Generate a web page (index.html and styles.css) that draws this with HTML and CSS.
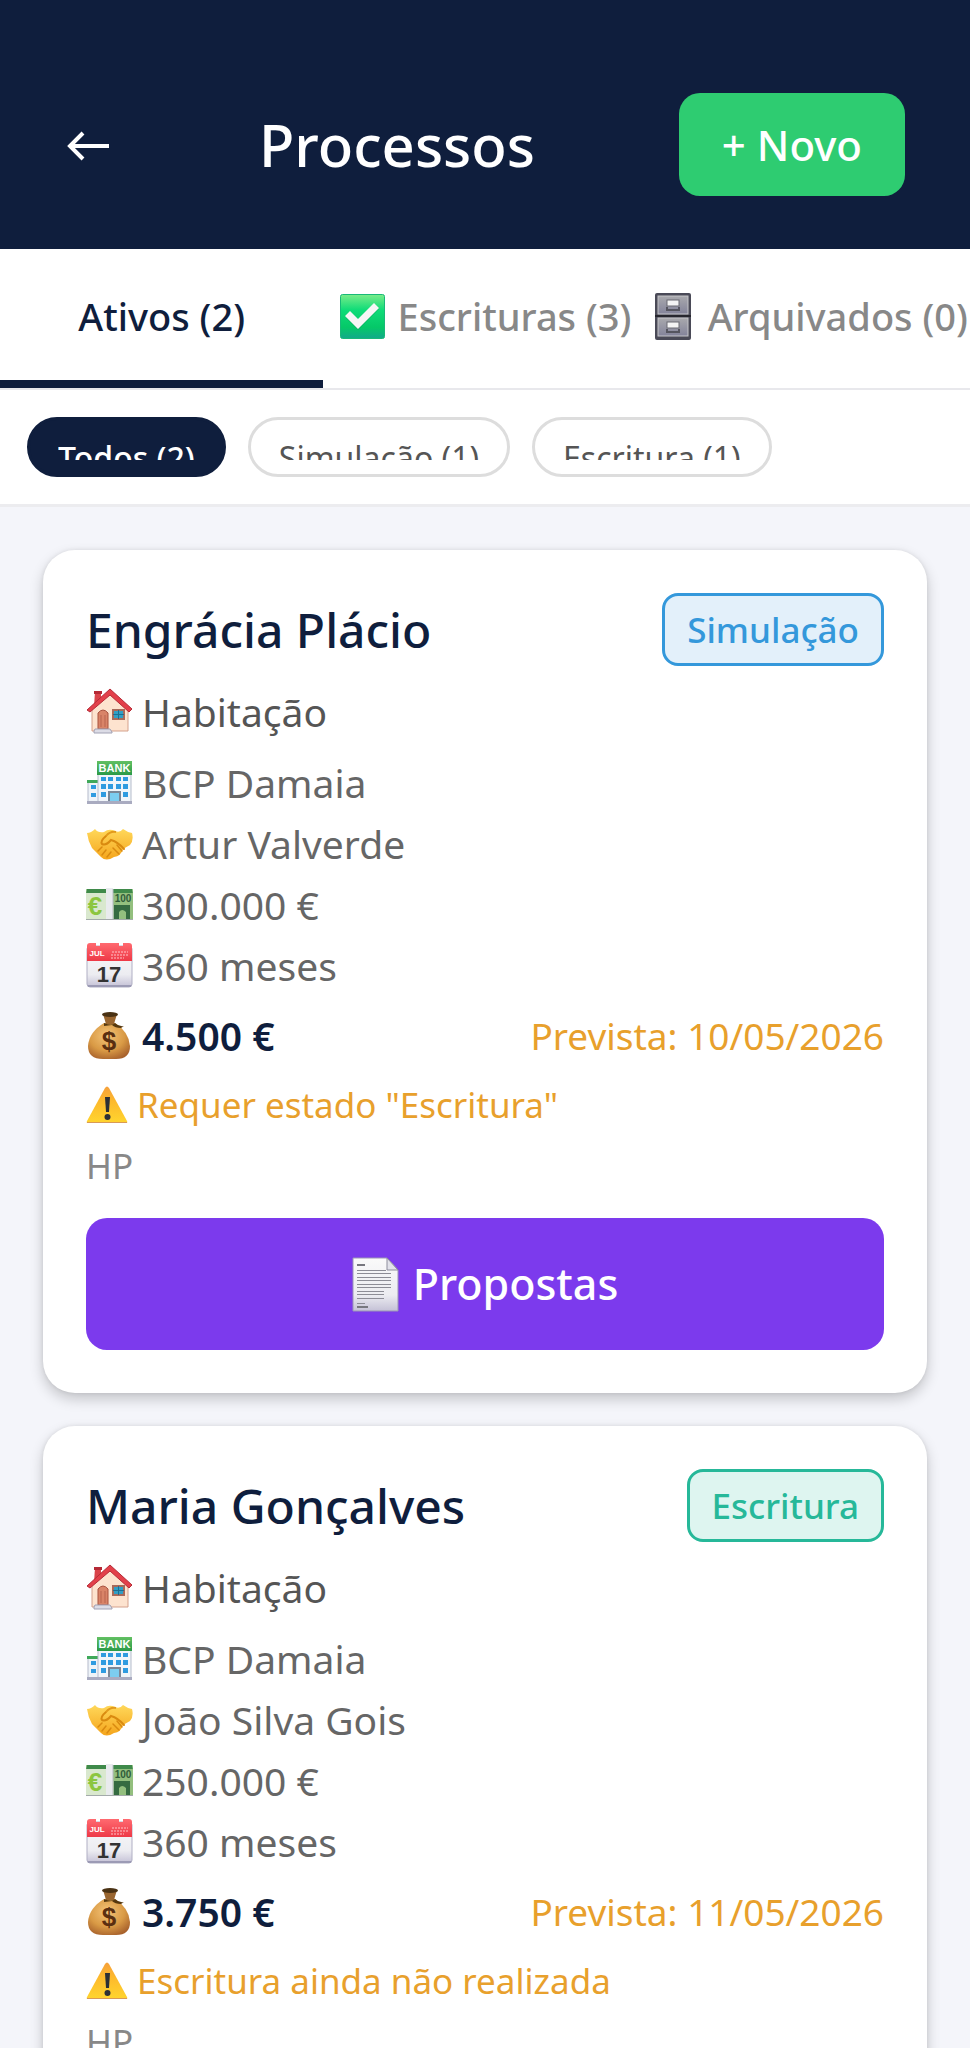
FILE: index.html
```html
<!DOCTYPE html>
<html lang="pt">
<head>
    <meta charset="UTF-8">
    <meta name="viewport" content="width=device-width, initial-scale=1.0">
    <title>Processos</title>
    <link rel="stylesheet" href="styles.css">
</head>
<body>

    <!-- Gradients used by the icons -->
    <svg class="gradients" aria-hidden="true">
        <defs>
            <linearGradient id="gCheck" x1="0" y1="0" x2="0" y2="1">
                <stop offset="0" stop-color="#7aec8a"/>
                <stop offset="0.35" stop-color="#0fdc78"/>
                <stop offset="0.75" stop-color="#05c868"/>
                <stop offset="1" stop-color="#12a98a"/>
            </linearGradient>
            <linearGradient id="gDrawer" x1="0" y1="0" x2="0" y2="1">
                <stop offset="0" stop-color="#a9a9ad"/>
                <stop offset="1" stop-color="#83839a"/>
            </linearGradient>
            <linearGradient id="gHand" x1="0" y1="0" x2="0" y2="1">
                <stop offset="0" stop-color="#ffd85a"/>
                <stop offset="1" stop-color="#f5a51c"/>
            </linearGradient>
            <linearGradient id="gPaper" x1="0" y1="0" x2="0" y2="1">
                <stop offset="0" stop-color="#fafafa"/>
                <stop offset="0.7" stop-color="#ececf1"/>
                <stop offset="1" stop-color="#c4c1d6"/>
            </linearGradient>
            <linearGradient id="gWarn" x1="0" y1="0" x2="0" y2="1">
                <stop offset="0" stop-color="#f5a03c"/>
                <stop offset="0.4" stop-color="#fdb92c"/>
                <stop offset="1" stop-color="#ffd52e"/>
            </linearGradient>
            <linearGradient id="gRed" x1="0" y1="0" x2="0" y2="1">
                <stop offset="0" stop-color="#ff6a70"/>
                <stop offset="1" stop-color="#ee3947"/>
            </linearGradient>
            <linearGradient id="gSign" x1="0" y1="0" x2="0" y2="1">
                <stop offset="0" stop-color="#62c062"/>
                <stop offset="1" stop-color="#2a9a48"/>
            </linearGradient>
            <radialGradient id="gBag" cx="0.45" cy="0.35" r="0.7">
                <stop offset="0" stop-color="#f4c478"/>
                <stop offset="0.6" stop-color="#d99a45"/>
                <stop offset="1" stop-color="#a8622c"/>
            </radialGradient>
        </defs>
    </svg>

    <!-- Icons -->
    <svg class="symbols" aria-hidden="true">
        <symbol id="check" viewBox="0 0 47 47">
            <rect x="1.5" y="1.5" width="44" height="44" rx="2" fill="url(#gCheck)" stroke="#18b978"/>
            <path d="M7 25l5-5 7 7 16-16 5 5-21 21z" fill="#0a9a55" opacity="0.5"/>
            <path d="M6 23l5-5 8 8 16-16 5 5-21 21z" fill="#f6f6f6"/>
        </symbol>

        <symbol id="cabinet" viewBox="0 0 47 47">
            <rect x="6" y="0" width="36" height="47" rx="2" fill="#4a4a57"/>
            <rect x="9" y="3" width="30" height="18" fill="url(#gDrawer)" stroke="#c4c4c8"/>
            <rect x="9" y="25" width="30" height="18" fill="url(#gDrawer)" stroke="#c4c4c8"/>
            <path d="M6 23h36" stroke="#26262e" stroke-width="2"/>
            <rect x="18" y="7" width="12" height="6" fill="#f4f4f4" stroke="#6a6a72"/>
            <path d="M18 14v3h12v-3" fill="none" stroke="#55555f" stroke-width="2"/>
            <rect x="18" y="29" width="12" height="6" fill="#f4f4f4" stroke="#6a6a72"/>
            <path d="M18 36v3h12v-3" fill="none" stroke="#55555f" stroke-width="2"/>
        </symbol>

        <symbol id="house" viewBox="0 0 47 47">
            <path d="M9 4h6v14H8z" fill="#d9434a"/>
            <rect x="8" y="3" width="8" height="3" fill="#b52a36"/>
            <path d="M6 21L24 5l18 16v22H6z" fill="#fde3cf" stroke="#d4a18c"/>
            <path d="M1 22L24 1l22 20-3 3L24 7 4 24z" fill="#e3404a" stroke="#b62c38" stroke-linejoin="round"/>
            <path d="M12 41V25q5-6 10 0v16z" fill="#d98468" stroke="#a8523f"/>
            <path d="M15 39V27M19 39V27" stroke="#b9654f"/>
            <rect x="27" y="22" width="11" height="9" fill="#2f9fc6" stroke="#a86a5a" stroke-width="2"/>
            <path d="M32.5 22v9M27 26.5h11" stroke="#1c6f93"/>
            <path d="M9 41h15l2 3v1H8v-2z" fill="#dcdce6" stroke="#a2a2b4"/>
        </symbol>

        <symbol id="bank" viewBox="0 0 47 47">
            <rect x="2" y="23" width="12" height="21" fill="#eef3f8" stroke="#b5bccb"/>
            <rect x="1" y="21" width="13" height="3" fill="#3fa95a"/>
            <rect x="12" y="15" width="33" height="29" fill="#f1f5fa" stroke="#b5bccb"/>
            <rect x="11" y="2" width="35" height="14" fill="url(#gSign)"/>
            <text x="28.5" y="13" class="bank-text">BANK</text>
            <g fill="#2f9be0">
                <rect x="15" y="18" width="5" height="4"/><rect x="22" y="18" width="5" height="4"/>
                <rect x="30" y="18" width="5" height="4"/><rect x="37" y="18" width="5" height="4"/>
                <rect x="15" y="25" width="5" height="5"/><rect x="22" y="25" width="5" height="5"/>
                <rect x="30" y="25" width="5" height="5"/><rect x="37" y="25" width="5" height="5"/>
                <rect x="15" y="33" width="5" height="5"/><rect x="37" y="33" width="5" height="5"/>
                <rect x="5" y="26" width="5" height="4"/><rect x="5" y="34" width="5" height="4"/>
            </g>
            <rect x="23" y="33" width="11" height="10" fill="#7ccdf0" stroke="#7b8797" stroke-width="2"/>
            <rect x="1" y="42" width="45" height="3" fill="#a9abc0"/>
        </symbol>

        <symbol id="handshake" viewBox="0 0 47 47">
            <path d="M1 13q4 0 8-4 3 4 9 3 5-4 11-1 5 2 8-2 4 3 9 4 2 7-2 12l-7 4q-2 7-9 8-8 5-13 0l-9-9q-4-7-5-15z" fill="url(#gHand)"/>
            <path d="M20 16q-6 5-4 8 4 2 9-4 7 2 13 9" fill="none" stroke="#d98a10" stroke-width="2" stroke-linecap="round"/>
            <path d="M20 16q4-5 10-4" fill="none" stroke="#e29a1c" stroke-width="2"/>
            <path d="M12 31l4-4M16 35l4-5M21 37l4-5M27 28l6 6M31 25l5 6" stroke="#d98a10" stroke-width="1.5" stroke-linecap="round"/>
        </symbol>

        <symbol id="money" viewBox="0 0 47 47">
            <rect x="0" y="8" width="47" height="31" fill="#a9cf98"/>
            <path d="M1 8h45l1 5H0z" fill="#3f8a4a"/>
            <rect x="0" y="12" width="20" height="26" fill="#d9e8ce"/>
            <path d="M27 12h20v26H27z" fill="#93bf7e"/>
            <text x="9" y="34" class="euro-text">€</text>
            <text x="37" y="21" class="hundred-text">100</text>
            <path d="M28 38V24h16v14h-4v-7q-4-4-7 0v7z" fill="#356b41"/>
            <rect x="20" y="7" width="7" height="32" fill="#e9ebee"/>
            <path d="M27 8v31" stroke="#b5bcc2"/>
            <path d="M0 38.5h47" stroke="#a3aaaa"/>
        </symbol>

        <symbol id="calendar" viewBox="0 0 47 47">
            <rect x="1" y="4" width="45" height="41" rx="3" fill="url(#gPaper)" stroke="#b0afc4"/>
            <path d="M1 19V4q0-3 3-3h6v3h4V1h19v3h4V1h6q3 0 3 3v15z" fill="url(#gRed)"/>
            <text x="11" y="14" class="month-text">JUL</text>
            <path d="M26 10h16M25 13h17M25 16h13" stroke="#ffc4c8" stroke-dasharray="2 1"/>
            <text x="23" y="40" class="day-text">17</text>
            <path d="M2 44h43" stroke="#9c9bb5" stroke-width="2"/>
        </symbol>

        <symbol id="bag" viewBox="0 0 47 47">
            <path d="M18 11q-15 9-16 23 0 13 15 13h13q14 0 14-13Q43 20 29 11z" fill="url(#gBag)"/>
            <path d="M17 2l3 10h8l3-10z" fill="#9a6630"/>
            <ellipse cx="24" cy="2.5" rx="8" ry="2.5" fill="#4a3214"/>
            <path d="M18 11q8 3 11 0 4 4 9 3l-3 2q-6 0-9-3l-8 1z" fill="#55380f"/>
            <text x="23" y="38" class="dollar-text">$</text>
        </symbol>

        <symbol id="warning" viewBox="0 0 42 42">
            <path d="M19 4q2-3 4 0l18 33q1 2-1 2H2q-2 0-1-2z" fill="url(#gWarn)"/>
            <path d="M1 38.5h40" stroke="#d99a55"/>
            <path d="M19 13h5l-1 15h-3z" fill="#2c2f36"/>
            <circle cx="21.5" cy="33" r="3" fill="#2c2f36"/>
        </symbol>

        <symbol id="page" viewBox="0 0 47 55">
            <path d="M1 1h34l11 12v41H1z" fill="url(#gPaper)" stroke="#9b96b5"/>
            <path d="M35 1v12h11z" fill="#e2e2ea" stroke="#8e8e9c"/>
            <path d="M5 8h8" stroke="#77777f" stroke-width="2"/>
            <path d="M5 13.5h29M5 16.5h34M5 20.5h34M5 23.5h34M5 27.5h34M5 30.5h34M5 34.5h27M5 37.5h27M5 41.5h27M5 46.5h8" stroke="#8d8d96"/>
            <path d="M5 50h11" stroke="#77777f" stroke-width="2"/>
        </symbol>
    </svg>

    <header class="header">
        <button class="back" aria-label="Voltar">
            <svg viewBox="0 0 50 50"><path d="M44 26H6M18 13L5 26l13 13" fill="none" stroke="#fff" stroke-width="4"/></svg>
        </button>
        <h1>Processos</h1>
        <button class="new-button">+ Novo</button>
    </header>

    <nav class="tabs">
        <button class="tab active">Ativos (2)</button>
        <button class="tab"><svg class="icon"><use href="#check"/></svg>Escrituras (3)</button>
        <button class="tab"><svg class="icon"><use href="#cabinet"/></svg>Arquivados (0)</button>
    </nav>

    <div class="filters">
        <button class="chip active"><span>Todos (2)</span></button>
        <button class="chip"><span>Simulação (1)</span></button>
        <button class="chip"><span>Escritura (1)</span></button>
    </div>

    <main class="list">
        <article class="card">
            <div class="card-head">
                <h2>Engrácia Plácio</h2>
                <span class="badge simulacao">Simulação</span>
            </div>
            <p class="row type"><svg class="icon"><use href="#house"/></svg>Habitação</p>
            <p class="row"><svg class="icon"><use href="#bank"/></svg>BCP Damaia</p>
            <p class="row"><svg class="icon"><use href="#handshake"/></svg>Artur Valverde</p>
            <p class="row"><svg class="icon"><use href="#money"/></svg>300.000 €</p>
            <p class="row"><svg class="icon"><use href="#calendar"/></svg>360 meses</p>
            <div class="summary">
                <p class="row value"><svg class="icon"><use href="#bag"/></svg>4.500 €</p>
                <p class="date">Prevista: 10/05/2026</p>
            </div>
            <p class="row warning"><svg class="icon"><use href="#warning"/></svg>Requer estado "Escritura"</p>
            <p class="note">HP</p>
            <button class="proposals"><svg><use href="#page"/></svg>Propostas</button>
        </article>

        <article class="card">
            <div class="card-head">
                <h2>Maria Gonçalves</h2>
                <span class="badge escritura">Escritura</span>
            </div>
            <p class="row type"><svg class="icon"><use href="#house"/></svg>Habitação</p>
            <p class="row"><svg class="icon"><use href="#bank"/></svg>BCP Damaia</p>
            <p class="row"><svg class="icon"><use href="#handshake"/></svg>João Silva Gois</p>
            <p class="row"><svg class="icon"><use href="#money"/></svg>250.000 €</p>
            <p class="row"><svg class="icon"><use href="#calendar"/></svg>360 meses</p>
            <div class="summary">
                <p class="row value"><svg class="icon"><use href="#bag"/></svg>3.750 €</p>
                <p class="date">Prevista: 11/05/2026</p>
            </div>
            <p class="row warning"><svg class="icon"><use href="#warning"/></svg>Escritura ainda não realizada</p>
            <p class="note">HP</p>
            <button class="proposals"><svg><use href="#page"/></svg>Propostas</button>
        </article>
    </main>

</body>
</html>
```
FILE: styles.css
```css
* {
    box-sizing: border-box;
}

body {
    margin: 0;
    height: 100vh;
    display: flex;
    flex-direction: column;
    overflow: hidden;
    font-family: "Noto Sans", sans-serif;
    background-color: #f4f5fa;
    color: #0f1e3d;
}

h1, h2, p {
    margin: 0;
}

button {
    border: none;
    padding: 0;
    font-family: inherit;
    cursor: pointer;
}

.gradients {
    position: absolute;
    width: 0;
    height: 0;
}

.symbols {
    display: none;
}

.icon {
    width: 47px;
    height: 47px;
    flex-shrink: 0;
}

/* Header */
.header {
    display: flex;
    justify-content: space-between;
    align-items: center;
    padding: 93px 65px 53px;
    background-color: #0f1e3d;
    color: white;
}

.back {
    width: 50px;
    height: 50px;
    background: none;
}

.back svg {
    display: block;
}

.header h1 {
    font-size: 58px;
    line-height: 80px;
    font-weight: 500;
}

.new-button {
    padding: 0 43px;
    font-size: 42px;
    line-height: 103px;
    font-weight: 500;
    color: white;
    background-color: #2ecc71;
    border-radius: 21px;
}

/* Tabs */
.tabs {
    display: flex;
    flex-shrink: 0;
    background-color: white;
    border-bottom: 2px solid #e8e8ec;
}

.tab {
    flex: 1 1 0;
    min-width: 0;
    display: flex;
    justify-content: center;
    align-items: center;
    gap: 12px;
    padding: 38px 0 34px;
    font-size: 38px;
    line-height: 59px;
    font-weight: 500;
    white-space: nowrap;
    color: #888;
    background: none;
    border-bottom: 8px solid transparent;
}

.tab.active {
    color: #0f1e3d;
    border-bottom-color: #0f1e3d;
}

/* Filters */
.filters {
    display: flex;
    flex-shrink: 0;
    gap: 22px;
    padding: 27px;
    background-color: white;
    border-bottom: 3px solid #ececef;
}

.chip {
    padding: 15px 28px 14px;
    border: 3px solid #ddd;
    border-radius: 30px;
    font-size: 32px;
    line-height: 46px;
    color: #555;
    background-color: white;
}

.chip span {
    display: block;
    height: 25px;
    overflow: hidden;
}

.chip.active {
    color: white;
    font-weight: 500;
    background-color: #0f1e3d;
    border-color: #0f1e3d;
}

/* Cards */
.list {
    flex: 1;
    min-height: 0;
    overflow: hidden;
    padding: 43px;
}

.card {
    margin-bottom: 33px;
    padding: 43px;
    background-color: white;
    border-radius: 32px;
    box-shadow: 0 6px 14px rgba(0, 0, 0, 0.2), 0 0 4px rgba(0, 0, 0, 0.08);
}

.card-head {
    display: flex;
    justify-content: space-between;
    align-items: center;
    margin-bottom: 15px;
}

.card h2 {
    font-size: 48px;
    line-height: 73px;
    font-weight: 500;
}

.badge {
    padding: 0 22px;
    border: 3px solid;
    border-radius: 16px;
    font-size: 35px;
    line-height: 67px;
    font-weight: 500;
}

.simulacao {
    color: #3498db;
    background-color: #e3f0fa;
}

.escritura {
    color: #26b899;
    background-color: #def5f0;
}

.row {
    display: flex;
    align-items: center;
    gap: 9px;
    font-size: 39px;
    line-height: 61px;
    color: #666;
}

.type {
    margin-bottom: 10px;
    color: #555;
}

.summary {
    display: flex;
    justify-content: space-between;
    align-items: center;
    margin: 9px 0 8px;
}

.value {
    font-weight: 600;
    color: #0f1e3d;
}

.date {
    font-size: 37px;
}

.note, .warning {
    font-size: 35px;
    line-height: 61px;
}

.date, .warning {
    color: #e8a02c;
}

.warning .icon {
    width: 42px;
    height: 42px;
}

.note {
    color: #888;
}

.proposals {
    display: flex;
    justify-content: center;
    align-items: center;
    gap: 14px;
    width: 100%;
    margin-top: 22px;
    font-size: 43px;
    line-height: 132px;
    font-weight: 500;
    color: white;
    background-color: #7c3aed;
    border-radius: 21px;
}

.proposals svg {
    width: 47px;
    height: 55px;
}

/* Lettering inside the icons */
.bank-text, .euro-text, .hundred-text, .month-text, .day-text, .dollar-text {
    font-family: "Liberation Sans", sans-serif;
    font-weight: bold;
    text-anchor: middle;
}

.bank-text {
    font-size: 11px;
    fill: white;
}

.euro-text {
    font-size: 26px;
    fill: #8cc63f;
}

.hundred-text {
    font-size: 10px;
    fill: #2f5c3a;
}

.month-text {
    font-size: 8px;
    fill: white;
}

.day-text {
    font-size: 22px;
    fill: #333;
}

.dollar-text {
    font-size: 26px;
    fill: #5a2f10;
}
```
